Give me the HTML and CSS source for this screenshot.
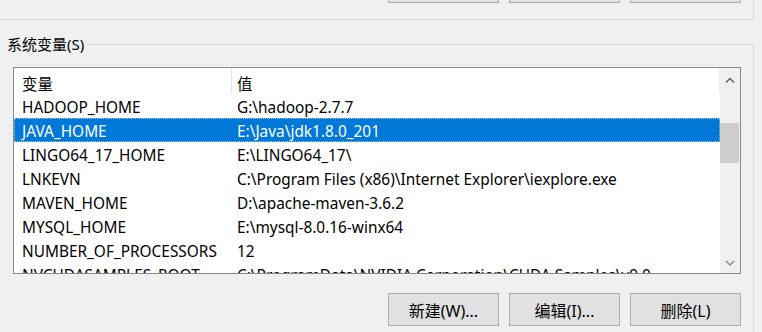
FILE: index.html
```html
<!DOCTYPE html>
<html lang="zh-CN">
<head>
  <meta charset="UTF-8">
  <title>环境变量</title>
  <link rel="stylesheet" href="styles.css">
</head>
<body>
  <div class="user-group">
      <div class="btn-row">
          <button class="btn">新建(N)...</button>
          <button class="btn">编辑(E)...</button>
          <button class="btn">删除(D)</button>
      </div>
  </div>

  <fieldset class="sys-group">
      <legend>系统变量(S)</legend>

      <div class="var-list">
          <div class="rows">
              <div class="row head">
                  <div class="cell name">变量</div>
                  <div class="cell value">值</div>
              </div>
              <div class="row">
                  <div class="cell name">HADOOP_HOME</div>
                  <div class="cell value">G:\hadoop-2.7.7</div>
              </div>
              <div class="row selected">
                  <div class="cell name">JAVA_HOME</div>
                  <div class="cell value">E:\Java\jdk1.8.0_201</div>
              </div>
              <div class="row">
                  <div class="cell name">LINGO64_17_HOME</div>
                  <div class="cell value">E:\LINGO64_17\</div>
              </div>
              <div class="row">
                  <div class="cell name">LNKEVN</div>
                  <div class="cell value">C:\Program Files (x86)\Internet Explorer\iexplore.exe</div>
              </div>
              <div class="row">
                  <div class="cell name">MAVEN_HOME</div>
                  <div class="cell value">D:\apache-maven-3.6.2</div>
              </div>
              <div class="row">
                  <div class="cell name">MYSQL_HOME</div>
                  <div class="cell value">E:\mysql-8.0.16-winx64</div>
              </div>
              <div class="row">
                  <div class="cell name">NUMBER_OF_PROCESSORS</div>
                  <div class="cell value">12</div>
              </div>
              <div class="row">
                  <div class="cell name">NVCUDASAMPLES_ROOT</div>
                  <div class="cell value">C:\ProgramData\NVIDIA Corporation\CUDA Samples\v9.0</div>
              </div>
          </div>
          <div class="scrollbar">
              <svg class="arrow" width="20" height="24" viewBox="0 0 20 24">
                  <path d="M6 14.5 L10 10.5 L14 14.5" fill="none" stroke="#606060" stroke-width="1.5"/>
              </svg>
              <div class="track">
                  <div class="thumb"></div>
              </div>
              <svg class="arrow" width="20" height="24" viewBox="0 0 20 24">
                  <path d="M6 12 L10 16 L14 12" fill="none" stroke="#8a8a8a" stroke-width="1.5"/>
              </svg>
          </div>
      </div>

      <div class="btn-row bottom">
          <button class="btn">新建(W)...</button>
          <button class="btn">编辑(I)...</button>
          <button class="btn">删除(L)</button>
      </div>
  </fieldset>
</body>
</html>
```

FILE: styles.css
```css
body {
    margin: 0;
    width: 762px;
    height: 332px;
    overflow: hidden;
    background: #f0f0f0;
    font-family: "Noto Sans", "Noto Sans CJK SC", sans-serif;
    font-size: 15.4px;
    color: #000;
}
.user-group {
    display: flow-root;
    width: 754px;
    height: 20px;
    box-sizing: border-box;
    border-right: 1px solid #d9d9d9;
    border-bottom: 1px solid #d9d9d9;
}
.user-group .btn-row {
    margin-top: -30px;
}
.btn-row {
    display: flex;
    gap: 10px;
    padding-left: 388px;
}
.btn-row.bottom {
    margin-top: 19px;
}
.btn {
    width: 111px;
    height: 33px;
    background: #e1e1e1;
    border: 1px solid #adadad;
    font-family: "Noto Sans", "Noto Sans CJK SC", sans-serif;
    font-size: 16px;
    color: #000;
    padding: 0;
}
.sys-group {
    width: 754px;
    height: 400px;
    box-sizing: border-box;
    margin: 15px 0 0 0;
    padding: 14px 0 0 0;
    border: 1px solid #d9d9d9;
    border-left: none;
}
.sys-group legend {
    padding: 0 3px 0 7px;
    margin: 0;
    line-height: 18px;
    font-size: 15px;
}
.var-list {
    display: flex;
    margin-left: 13px;
    width: 728px;
    height: 207px;
    box-sizing: border-box;
    border: 1px solid #828790;
    background: #fff;
    overflow: hidden;
}
.rows {
    flex: 1;
}
.row {
    display: grid;
    grid-template-columns: 218px 1fr;
    height: 24px;
    line-height: 27px;
    white-space: nowrap;
}
.row.head {
    height: 26px;
    line-height: 33px;
}
.row.head .name {
    border-right: 1px solid #e5e5e5;
}
.row.head .value {
    border-right: 1px solid #eeeeee;
}
.cell {
    height: 100%;
    overflow: hidden;
}
.cell.name {
    padding-left: 8px;
}
.cell.value {
    padding-left: 5px;
}
.row.selected {
    background: #0078d7;
    color: #fff;
    outline: 1px dotted #9cc9ef;
    outline-offset: -1px;
}
.scrollbar {
    width: 20px;
    display: flex;
    flex-direction: column;
    background: #f0f0f0;
}
.arrow {
    display: block;
}
.track {
    flex: 1;
    padding-top: 31px;
}
.thumb {
    margin: 0 1px 0 0;
    height: 40px;
    background: #cdcdcd;
}
```
